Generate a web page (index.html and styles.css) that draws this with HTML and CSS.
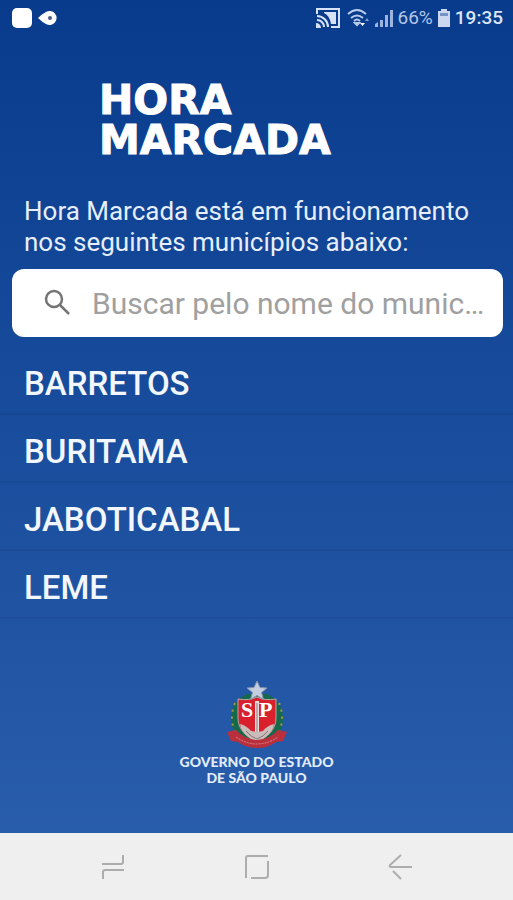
FILE: index.html
```html
<!DOCTYPE html>
<html lang="pt-BR">
<head>
    <meta charset="UTF-8">
    <meta name="viewport" content="width=device-width, initial-scale=1.0">
    <title>Hora Marcada</title>
    <link rel="stylesheet" href="styles.css">
</head>
<body>

<!-- Status bar -->
<div class="status-bar">
    <div class="status-left">
        <svg width="22" height="22" viewBox="0 0 22 22"><rect x="1" y="1" width="20" height="20" rx="5" fill="#fff"/></svg>
        <svg width="20" height="16" viewBox="0 0 20 16"><path d="M0 8Q4 4 8 2A7 7 0 1 1 8 14Q4 12 0 8Z" fill="#fff"/><circle cx="12" cy="8" r="2" fill="#4d5b86"/></svg>
    </div>
    <div class="status-right">
        <svg width="24" height="20" viewBox="0 0 24 20" fill="none" stroke="#d6e2f6" stroke-width="2">
            <path d="M1 6V1h22v18H15"/>
            <path d="M8 4h12v12h-5Q14 8 8 5z" fill="#d6e2f6" stroke="none"/>
            <path d="M1 8a11 11 0 0 1 11 11M1 12a7 7 0 0 1 7 7"/>
            <path d="M0 15a5 5 0 0 1 5 5H0z" fill="#d6e2f6" stroke="none"/>
        </svg>
        <svg class="wifi" width="23" height="20" viewBox="0 0 23 20" fill="none" stroke="#b9cbea" stroke-width="2">
            <path d="M1 6Q10-2 19 6M4 10q6-5 12 0M7 13q3-3 6 0"/>
            <path d="M8 15l2 2 2-2z" fill="#b9cbea"/>
            <path d="M13 15l2.500 3 2.500-3z" fill="#fff" stroke="none"/>
            <path d="M18 13l2-3 2 3z" fill="#7e9bd0" stroke="none"/>
        </svg>
        <svg width="18" height="18" viewBox="0 0 18 18" fill="#9db4de">
            <path d="M0 18v-3l3-2v5zM5 18v-7h3v7zM10 18V6h3v12zM15 18V1h3v17z"/>
        </svg>
        <span class="battery-text">66%</span>
        <svg width="12" height="18" viewBox="0 0 12 18"><path d="M3 2V0h6v2h3v16H0V2z" fill="#cbd8ef"/><path d="M2 4h8v3H2z" fill="#7792c6"/></svg>
        <span class="clock">19:35</span>
    </div>
</div>

<main class="content">
    <h1>HORA<br>MARCADA</h1>

    <label class="intro" for="busca">Hora Marcada está em funcionamento nos seguintes municípios abaixo:</label>

    <!-- Search -->
    <div class="search-box">
        <svg width="28" height="28" viewBox="0 0 28 28" fill="none" stroke="#757575" stroke-width="2.500">
            <circle cx="10" cy="10" r="8"/>
            <path d="M16 16l9 9"/>
        </svg>
        <input type="text" id="busca" placeholder="Buscar pelo nome do município">
    </div>

    <!-- Cities -->
    <ul class="city-list">
        <li><a href="#barretos">BARRETOS</a></li>
        <li><a href="#buritama">BURITAMA</a></li>
        <li><a href="#jaboticabal">JABOTICABAL</a></li>
        <li><a href="#leme">LEME</a></li>
    </ul>
</main>

<footer class="government">
    <svg width="60" height="68" viewBox="0 0 60 68">
        <path d="M20 13C3 20 0 40 9 54l13 8h16l13-8c9-14 6-34-11-41z" fill="#17694b"/>
        <path d="M8 22c-4 9-4 20 0 29M52 22c4 9 4 20 0 29" fill="none" stroke="#a89b3c" stroke-width="2" stroke-dasharray="2 5"/>
        <path d="M11 18Q22 20 30 16q8 4 19 2v19c0 12-9 19-19 24-10-5-19-12-19-24z" fill="#d9202d" stroke="#b9a9a8" stroke-width="1"/>
        <path d="M30 20v37" stroke="#e9dedd" stroke-width="4"/>
        <path d="M30 22v34" stroke="#8f7777" stroke-width="1"/>
        <path d="M13 43c4 1 9 4 11 7l6 1 6-1c2-3 7-6 11-7-1 8-8 14-17 18-9-4-16-10-17-18z" fill="#c9bcbb"/>
        <path d="M19 50q5 6 11 8 6-2 11-8" fill="none" stroke="#8b7474" stroke-width="1"/>
        <text class="crest-letter" x="14" y="36">S</text>
        <text class="crest-letter" x="32" y="36">P</text>
        <path d="M0 51l9-2q8 9 21 10 13-1 21-10l9 2-4 9-7 1q-8 6-19 6t-19-6l-7-1z" fill="#b92f3c"/>
        <path d="M9 56q10 7 21 7t21-7" fill="none" stroke="#d98a8e" stroke-width="1" stroke-dasharray="2 1"/>
        <path d="M30 0l3 6.500 7 .5-5.500 4.500 2 7-6.500-4-6.500 4 2-7L20 7l7-.5z" fill="#c4cede" stroke="#8793ad" stroke-width="1"/>
    </svg>
    <p>GOVERNO DO ESTADO<br>DE SÃO PAULO</p>
</footer>

<!-- Navigation bar -->
<nav class="nav-bar">
    <button type="button" aria-label="Recentes">
        <svg width="26" height="26" viewBox="0 0 26 26"><path d="M2 10h19q2 0 2-2V1M24 16H5q-2 0-2 2v7"/></svg>
    </button>
    <button type="button" aria-label="Início">
        <svg width="26" height="26" viewBox="0 0 26 26"><path d="M2 24V4q0-2 2-2h20M24 7v14q0 3-3 3H7"/></svg>
    </button>
    <button type="button" aria-label="Voltar">
        <svg width="26" height="26" viewBox="0 0 26 26"><path d="M13 1L2 11q-1 2 1 2h21M5 17l8 8"/></svg>
    </button>
</nav>

</body>
</html>
```
FILE: styles.css
```css
/* General Styles */
* {
    box-sizing: border-box;
}

body {
    font-family: Roboto, "Liberation Sans", sans-serif;
    margin: 0;
    min-height: 100vh;
    display: flex;
    flex-direction: column;
    color: white;
    background: linear-gradient(#083b8c, #2b60ae);
}

svg {
    display: block;
    flex: none;
}

/* Status Bar */
.status-bar {
    display: flex;
    justify-content: space-between;
    align-items: center;
    height: 36px;
    padding: 0 10px 0 11px;
}

.status-left,
.status-right {
    display: flex;
    align-items: center;
    gap: 5px;
}

.wifi {
    margin-left: 2px;
}

.battery-text,
.clock {
    font-size: 19px;
    line-height: 24px;
}

.battery-text {
    color: #b4c6e7;
}

.clock {
    font-weight: 500;
    color: #dce6f7;
}

/* Content */
.content {
    flex: 1;
}

h1 {
    margin: 44px 24px 0 99px;
    font-family: "DejaVu Sans", sans-serif;
    font-size: 41px;
    line-height: 40px;
    font-weight: bold;
    -webkit-text-stroke: 1px white;
}

.intro {
    display: block;
    margin: 36px 24px 0;
    font-size: 26px;
    line-height: 31px;
    color: #e6eefb;
}

/* Search */
.search-box {
    display: flex;
    align-items: center;
    gap: 20px;
    height: 68px;
    margin: 11px 10px 0 12px;
    padding: 0 16px 0 32px;
    background-color: white;
    border-radius: 12px;
}

.search-box input {
    flex: 1;
    min-width: 0;
    padding: 0;
    border: none;
    outline: none;
    background: none;
    font-family: inherit;
    font-size: 30px;
    text-overflow: ellipsis;
}

.search-box input::placeholder {
    color: #a0a0a0;
}

/* City List */
.city-list {
    list-style: none;
    margin: 10px 0 0;
    padding: 0;
}

.city-list li {
    border-bottom: 2px solid rgba(0, 30, 90, 0.12);
}

.city-list a {
    display: block;
    padding: 18px 24px 10px;
    font-size: 33px;
    line-height: 38px;
    font-weight: 500;
    color: #f2f6fd;
    text-decoration: none;
}

/* Footer */
.government {
    display: flex;
    flex-direction: column;
    align-items: center;
    padding-bottom: 47px;
}

.government p {
    margin: 5px 0 0;
    font-family: Lato, sans-serif;
    font-size: 14px;
    line-height: 16px;
    font-weight: 900;
    text-align: center;
    color: #e3ecfa;
}

.crest-letter {
    font-family: "Liberation Serif", serif;
    font-size: 22px;
    font-weight: bold;
    fill: white;
}

/* Navigation Bar */
.nav-bar {
    display: flex;
    justify-content: center;
    gap: 62px;
    height: 67px;
    background-color: #efefef;
}

.nav-bar button {
    display: flex;
    align-items: center;
    justify-content: center;
    width: 82px;
    padding: 0;
    border: none;
    background: none;
    cursor: pointer;
}

.nav-bar path {
    fill: none;
    stroke: #adadad;
    stroke-width: 2;
}
```
